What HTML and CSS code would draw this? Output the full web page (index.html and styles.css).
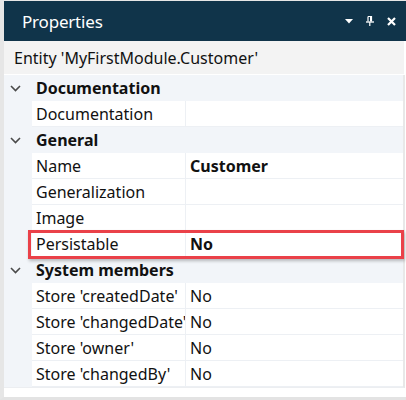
FILE: index.html
```html
<!DOCTYPE html>
<html>
<head>
<meta charset="utf-8">
<link rel="stylesheet" href="styles.css">
</head>
<body>
<div class="window">
  <div class="titlebar">
    <span class="title">Properties</span>
    <div class="tools">
      <svg class="ico" width="8" height="5" viewBox="0 0 8 5"><path d="M0 0H8L4 4.5Z" fill="#fff"/></svg>
      <svg class="ico" width="8" height="10" viewBox="0 0 8 10"><path d="M2 0.5H5.5V5.5M2 0.5V5.5M5.5 0.5V5.5" stroke="#fff" stroke-width="1.2" fill="none"/><path d="M4.5 0.5V5.5" stroke="#fff" stroke-width="1"/><path d="M0 6H8" stroke="#fff" stroke-width="1.3"/><path d="M3.8 6V10" stroke="#fff" stroke-width="1.2"/></svg>
      <svg class="ico" width="9" height="9" viewBox="0 0 9 9"><path d="M1 1L8 8M8 1L1 8" stroke="#fff" stroke-width="2.2"/></svg>
    </div>
  </div>
  <div class="entity">Entity 'MyFirstModule.Customer'</div>
  <div class="grid">
    <div class="group"><span class="chev"><svg width="11" height="7" viewBox="0 0 11 7"><path d="M1 1L5.5 5.5L10 1" stroke="#4a4a4a" stroke-width="1.6" fill="none"/></svg></span><span class="gname">Documentation</span></div>
    <div class="row"><span class="gut"></span><span class="lbl">Documentation</span><span class="val"></span></div>
    <div class="group"><span class="chev"><svg width="11" height="7" viewBox="0 0 11 7"><path d="M1 1L5.5 5.5L10 1" stroke="#4a4a4a" stroke-width="1.6" fill="none"/></svg></span><span class="gname">General</span></div>
    <div class="row"><span class="gut"></span><span class="lbl">Name</span><span class="val bold">Customer</span></div>
    <div class="row"><span class="gut"></span><span class="lbl">Generalization</span><span class="val"></span></div>
    <div class="row"><span class="gut"></span><span class="lbl">Image</span><span class="val"></span></div>
    <div class="row hl"><span class="gut"></span><span class="lbl">Persistable</span><span class="val bold">No</span><span class="mark"></span></div>
    <div class="group"><span class="chev"><svg width="11" height="7" viewBox="0 0 11 7"><path d="M1 1L5.5 5.5L10 1" stroke="#4a4a4a" stroke-width="1.6" fill="none"/></svg></span><span class="gname">System members</span></div>
    <div class="row"><span class="gut"></span><span class="lbl">Store 'createdDate'</span><span class="val">No</span></div>
    <div class="row"><span class="gut"></span><span class="lbl">Store 'changedDate'</span><span class="val">No</span></div>
    <div class="row"><span class="gut"></span><span class="lbl">Store 'owner'</span><span class="val">No</span></div>
    <div class="row"><span class="gut"></span><span class="lbl">Store 'changedBy'</span><span class="val">No</span></div>
  </div>
</div>
</body>
</html>
```
FILE: styles.css
```css
html, body { margin: 0; padding: 0; background: #fff; }
body { font-family: "Noto Sans", "Open Sans", sans-serif; color: #111; }
.window {
  width: 406px; height: 400px; box-sizing: border-box;
  border-left: 4px solid #e6e6e6; border-top: 1px solid #e6e6e6; border-bottom: 3px solid #e3e3e3;
  display: flex; flex-direction: column; background: #fff;
}
.titlebar {
  height: 40px; background: #10344a; color: #fff;
  display: flex; align-items: center; padding: 0 10px 0 18px;
}
.title { font-size: 17px; flex: 1; letter-spacing: -0.2px; }
.tools { display: flex; align-items: center; gap: 13px; }
.ico { display: block; }
.entity {
  height: 33px; background: #f3f3f3; font-size: 16px; display: flex; align-items: center;
  padding-left: 10px; margin-right: 2px;
}
.grid {
  margin-top: 1px; border-right: 2px solid #e8e8e8; border-bottom: 1px solid #eceef1;
  margin-right: 1px; display: flex; flex-direction: column;
}
.group {
  height: 26px; background: #f2f5f9; display: flex; align-items: center;
}
.chev { width: 28px; display: flex; justify-content: center; padding-right: 6px; box-sizing: border-box; }
.chev svg { display: block; }
.gname { font-weight: bold; font-size: 16px; padding-left: 4px; }
.row {
  height: 26px; display: flex; align-items: stretch; position: relative;
}
.gut { width: 28px; background: #f2f5f9; flex: none; }
.lbl, .val {
  font-size: 16px; display: flex; align-items: center; padding-left: 4px; box-sizing: border-box;
  border-bottom: 1px solid #edf0f4; white-space: nowrap; overflow: hidden;
}
.lbl { width: 154px; flex: none; border-right: 1px solid #edf0f4; }
.val { flex: 1; }
.bold { font-weight: bold; }
.mark {
  position: absolute; left: 24px; top: -1px; right: -1px; height: 29px; box-sizing: border-box;
  border: 3px solid #ea4149; box-shadow: 1px 2px 3px rgba(0,0,0,0.25);
}
```
